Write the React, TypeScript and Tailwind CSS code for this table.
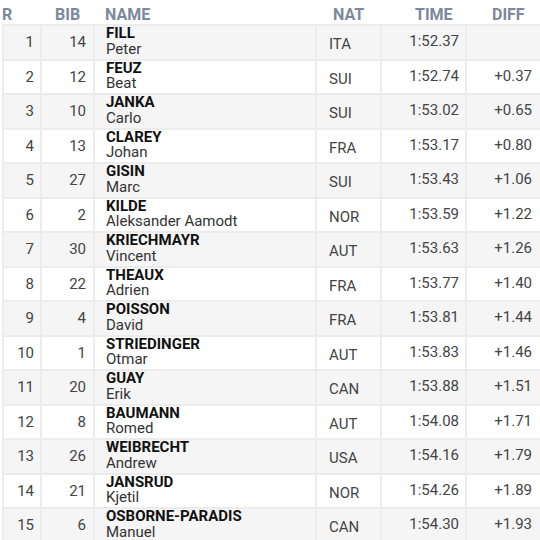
const results = [
  { r: 1, bib: 14, last: "FILL", first: "Peter", nat: "ITA", time: "1:52.37", diff: "" },
  { r: 2, bib: 12, last: "FEUZ", first: "Beat", nat: "SUI", time: "1:52.74", diff: "+0.37" },
  { r: 3, bib: 10, last: "JANKA", first: "Carlo", nat: "SUI", time: "1:53.02", diff: "+0.65" },
  { r: 4, bib: 13, last: "CLAREY", first: "Johan", nat: "FRA", time: "1:53.17", diff: "+0.80" },
  { r: 5, bib: 27, last: "GISIN", first: "Marc", nat: "SUI", time: "1:53.43", diff: "+1.06" },
  { r: 6, bib: 2, last: "KILDE", first: "Aleksander Aamodt", nat: "NOR", time: "1:53.59", diff: "+1.22" },
  { r: 7, bib: 30, last: "KRIECHMAYR", first: "Vincent", nat: "AUT", time: "1:53.63", diff: "+1.26" },
  { r: 8, bib: 22, last: "THEAUX", first: "Adrien", nat: "FRA", time: "1:53.77", diff: "+1.40" },
  { r: 9, bib: 4, last: "POISSON", first: "David", nat: "FRA", time: "1:53.81", diff: "+1.44" },
  { r: 10, bib: 1, last: "STRIEDINGER", first: "Otmar", nat: "AUT", time: "1:53.83", diff: "+1.46" },
  { r: 11, bib: 20, last: "GUAY", first: "Erik", nat: "CAN", time: "1:53.88", diff: "+1.51" },
  { r: 12, bib: 8, last: "BAUMANN", first: "Romed", nat: "AUT", time: "1:54.08", diff: "+1.71" },
  { r: 13, bib: 26, last: "WEIBRECHT", first: "Andrew", nat: "USA", time: "1:54.16", diff: "+1.79" },
  { r: 14, bib: 21, last: "JANSRUD", first: "Kjetil", nat: "NOR", time: "1:54.26", diff: "+1.89" },
  { r: 15, bib: 6, last: "OSBORNE-PARADIS", first: "Manuel", nat: "CAN", time: "1:54.30", diff: "+1.93" },
];

export default function App() {
  return (
    <div
      className="w-[540px] h-[540px] overflow-hidden bg-white"
      style={{ fontFamily: "Roboto, 'Liberation Sans', sans-serif" }}
    >
      {/* Header */}
      <div className="flex h-[24px] items-center text-[16px] font-bold text-[#7b899b] leading-none pt-[6px]">
        <div className="w-[42px] pl-[2px]">R</div>
        <div className="w-[53px] pl-[13px]">BIB</div>
        <div className="w-[222px] pl-[10px]">NAME</div>
        <div className="w-[65px] pl-[16px]">NAT</div>
        <div className="w-[85px] pl-[33px]">TIME</div>
        <div className="pl-[25px]">DIFF</div>
      </div>

      {/* Rows */}
      <div className="ml-[2px] w-[540px] border-t-2 border-l-2 border-[#ececec]">
        {results.map((row) => (
          <div
            key={row.r}
            className={`flex h-[34.5px] border-b-2 border-[#ececec] text-[15px] ${
              row.r % 2 === 1 ? "bg-[#f5f5f5]" : "bg-white"
            }`}
          >
            <div className="w-[38px] shrink-0 border-r-2 border-[#ececec] flex items-center justify-end pr-[6px] text-[#444]">
              {row.r}
            </div>
            <div className="w-[53px] shrink-0 border-r-2 border-[#ececec] flex items-center justify-end pr-[7px] text-[#444]">
              {row.bib}
            </div>
            <div className="w-[222px] shrink-0 border-r-2 border-[#ececec] flex flex-col justify-center pl-[11px] pb-[1px] leading-[15.5px]">
              <span className="font-bold text-[#111]">{row.last}</span>
              <span className="text-[#333]">{row.first}</span>
            </div>
            <div className="w-[65px] shrink-0 border-r-2 border-[#ececec] flex items-center pl-[12px] pt-[4px] text-[#444]">
              {row.nat}
            </div>
            <div className="w-[85px] shrink-0 border-r-2 border-[#ececec] flex items-center justify-end pr-[6px] pb-[2px] text-[#444]">
              {row.time}
            </div>
            <div className="w-[73px] shrink-0 flex items-center justify-end pr-[8px] pb-[2px] text-[#444]">
              {row.diff}
            </div>
          </div>
        ))}
      </div>
    </div>
  );
}
